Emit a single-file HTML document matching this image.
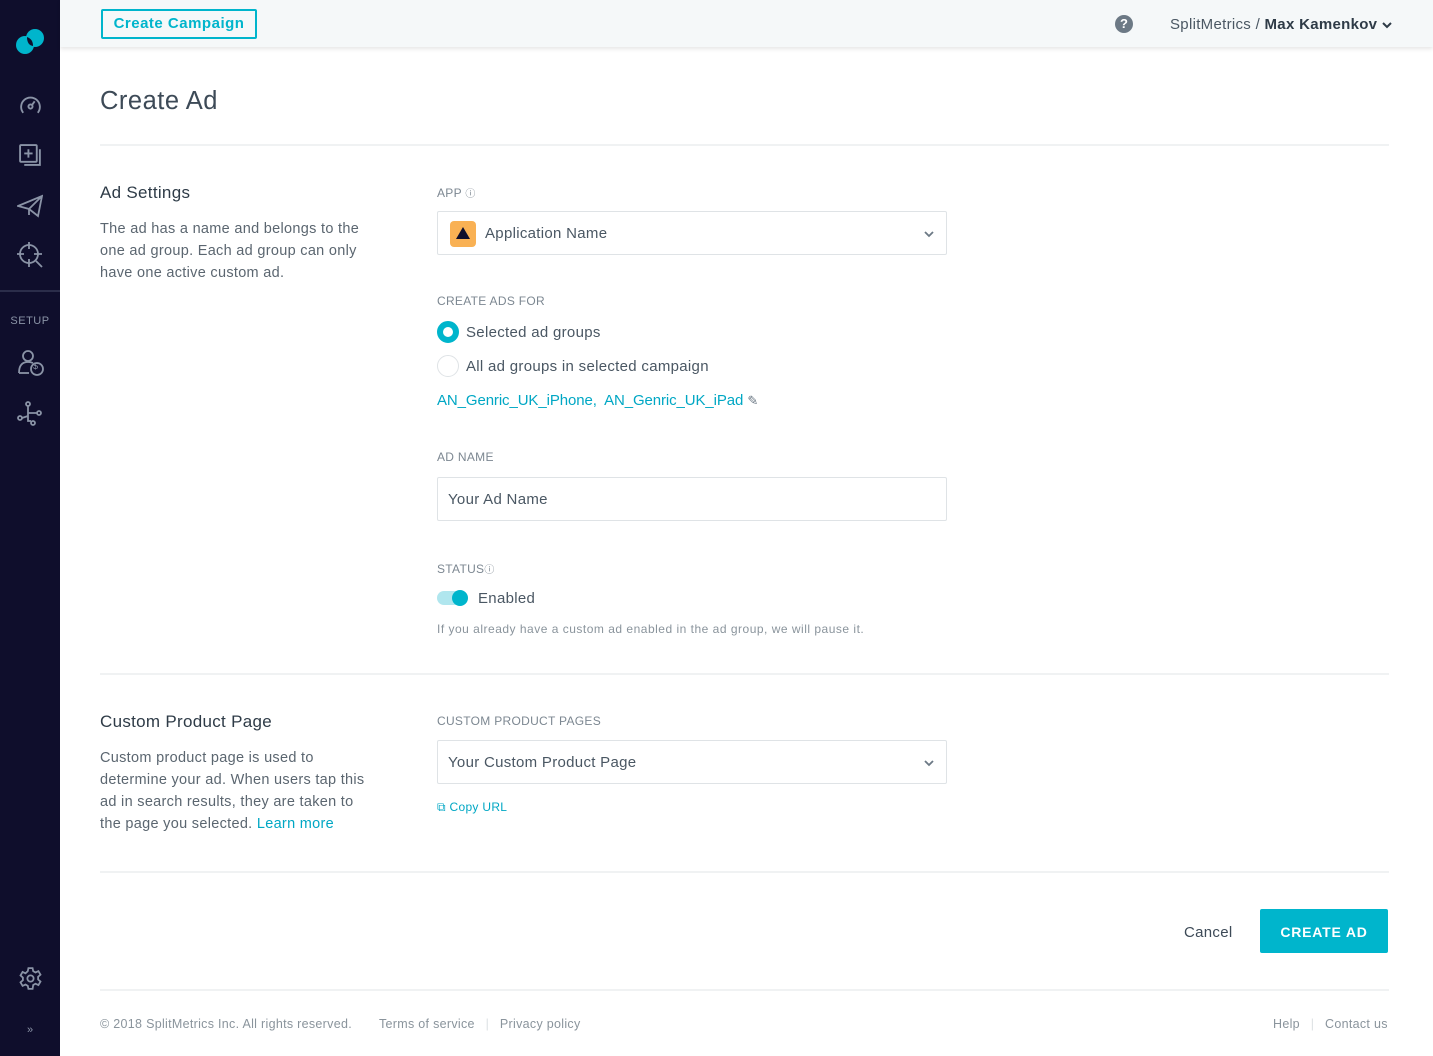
<!DOCTYPE html>
<html><head><meta charset="utf-8"><style>
*{box-sizing:border-box;margin:0;padding:0}
body{width:1433px;height:1056px;overflow:hidden;background:#fff;font-family:"Liberation Sans",sans-serif;color:#3d4a57;position:relative}
.sb{position:absolute;left:0;top:0;width:60px;height:1056px;background:#0f0e2c}
.sb svg{position:absolute}
.hdr{position:absolute;left:60px;top:0;right:0;height:47px;background:#f5f8f9;box-shadow:0 2px 4px rgba(0,0,0,.1)}
.abs{position:absolute}
.lbl{position:absolute;font-size:12px;color:#7c8791;letter-spacing:.3px}
.txt{font-size:15px;color:#4a5763;letter-spacing:.3px}
.hr{position:absolute;left:100px;width:1289px;height:2px;background:#f0f2f3}
.inp{position:absolute;left:437px;width:510px;height:44px;border:1px solid #dfe3e6;border-radius:2px;font-size:15px;color:#4a5763;padding-left:10px;line-height:44px;letter-spacing:.3px}
.chev{position:absolute;right:12px;top:18px}
.desc{position:absolute;left:100px;font-size:14.5px;line-height:22px;color:#5b6670;letter-spacing:.3px}
h3{position:absolute;left:100px;font-size:17px;font-weight:normal;color:#2e3b47;letter-spacing:.3px}
.ft{position:absolute;top:1017px;font-size:12.5px;color:#8a949c;letter-spacing:.3px}
</style></head><body>
<div class="sb">
<svg style="left:15px;top:27px" width="30" height="30" viewBox="0 0 30 30"><circle cx="10" cy="18" r="9" fill="#00b5cc"/><circle cx="20" cy="11" r="9" fill="#00b5cc"/><path d="M12 10 Q18 12 18 19 Q12 18 12 10Z" fill="#0f0e2c"/></svg>
<svg style="left:18px;top:93px" width="25" height="25" viewBox="0 0 24 24" fill="none" stroke="#8a93a6" stroke-width="1.8"><path d="M5 19A9 9 0 1 1 19 19"/><circle cx="12" cy="13" r="2"/><path d="M13.5 11.5L16 8"/></svg>
<svg style="left:18px;top:143px" width="25" height="25" viewBox="0 0 24 24" fill="none" stroke="#8a93a6" stroke-width="1.8"><rect x="2" y="2" width="16" height="16" rx="1"/><path d="M21 6v15H6M10 6v8M6 10h8"/></svg>
<svg style="left:17px;top:194px" width="26" height="24" viewBox="0 0 26 24" fill="none" stroke="#8a93a6" stroke-width="1.8"><path d="M1 12L25 2 21 22 12 15zM12 15L25 2M12 15v6"/></svg>
<svg style="left:16px;top:241px" width="28" height="28" viewBox="0 0 28 28" fill="none" stroke="#8a93a6" stroke-width="1.8"><circle cx="13" cy="13" r="9"/><path d="M13 1v7M13 18v8M1 13h7M18 13h8M20 20l6 6"/></svg>
<div class="abs" style="left:0;top:290px;width:60px;height:2px;background:#2b2d4a"></div>
<div class="abs" style="left:0;top:315px;width:60px;text-align:center;font-size:11px;color:#8a93a6;letter-spacing:.5px">SETUP</div>
<svg style="left:17px;top:350px" width="27" height="27" viewBox="0 0 27 27" fill="none" stroke="#8a93a6" stroke-width="1.8"><circle cx="11" cy="6" r="5"/><path d="M2 23Q2 12 11 12Q14 12 16 13"/><circle cx="20" cy="19" r="6"/><path d="M2 23h10"/></svg>
<div class="abs" style="left:33px;top:361px;font-size:9px;color:#8a93a6">$</div>
<svg style="left:17px;top:401px" width="27" height="25" viewBox="0 0 27 25" fill="none" stroke="#8a93a6" stroke-width="1.8"><circle cx="11" cy="3" r="2"/><circle cx="3" cy="17" r="2"/><circle cx="22" cy="12" r="2"/><circle cx="16" cy="22" r="2"/><path d="M11 5v15h3M11 12h9M11 15L5 17"/></svg>
<svg style="left:18px;top:966px" width="25" height="25" viewBox="0 0 24 24" fill="none" stroke="#8a93a6" stroke-width="1.7"><circle cx="12" cy="12" r="3"/><path d="M10 2h4l.6 3 2.2 1.2 2.8-1.3 2 3.4-2.3 2v2.6l2.3 2-2 3.4-2.8-1.3-2.2 1.2L14 22h-4l-.6-3-2.2-1.2-2.8 1.3-2-3.4 2.3-2v-2.6l-2.3-2 2-3.4 2.8 1.3L9.4 5z"/></svg>
<div class="abs" style="left:0;top:1024px;width:60px;text-align:center;font-size:11px;color:#8a93a6">»</div>
</div>
<div class="hdr">
<div class="abs" style="left:41px;top:9px;width:156px;height:30px;border:2px solid #00b5cc;border-radius:2px;text-align:center;line-height:26px;font-size:15px;font-weight:bold;color:#00b5cc;letter-spacing:.5px">Create Campaign</div>
<div class="abs" style="left:1055px;top:15px;width:18px;height:18px;border-radius:50%;background:#6c7985;color:#fff;font-size:13px;font-weight:bold;text-align:center;line-height:18px">?</div>
<div class="abs" style="left:1110px;top:16px;font-size:15px;color:#4a5763;letter-spacing:.3px">SplitMetrics / <b style="color:#2e3b47">Max Kamenkov</b> <svg width="10" height="8"><path d="M1 2l4 4 4-4" stroke="#2e3b47" stroke-width="2" fill="none"/></svg></div>
</div>
<div class="abs" style="left:100px;top:87px;font-size:25.5px;color:#3d4a57;letter-spacing:.5px">Create Ad</div>
<div class="hr" style="top:144px"></div>
<h3 style="top:183px">Ad Settings</h3>
<div class="desc" style="top:218px">The ad has a name and belongs to the<br>one ad group. Each ad group can only<br>have one active custom ad.</div>
<div class="lbl" style="left:437px;top:185px">APP <span style="font-size:10px">ⓘ</span></div>
<div class="inp" style="top:211px;padding-left:47px"><div class="abs" style="left:12px;top:9px;width:26px;height:26px;border-radius:4px;background:#f9b154"></div><svg class="abs" style="left:18px;top:15px" width="14" height="12"><path d="M7 0L14 12H0z" fill="#0f0e2c"/></svg>Application Name<svg class="chev" width="10" height="8"><path d="M1 2l4 4 4-4" stroke="#6c7985" stroke-width="1.8" fill="none"/></svg></div>
<div class="lbl" style="left:437px;top:294px">CREATE ADS FOR</div>
<div class="abs" style="left:437px;top:321px;width:22px;height:22px;border-radius:50%;border:6px solid #00b5cc"></div>
<div class="abs txt" style="left:466px;top:324px">Selected ad groups</div>
<div class="abs" style="left:437px;top:355px;width:22px;height:22px;border-radius:50%;border:1px solid #dfe3e6"></div>
<div class="abs txt" style="left:466px;top:358px">All ad groups in selected campaign</div>
<div class="abs txt" style="left:437px;top:392px;color:#00a7c4;letter-spacing:-.1px">AN_Genric_UK_iPhone,&nbsp; AN_Genric_UK_iPad <span style="color:#6c7985;font-size:13px">✎</span></div>
<div class="lbl" style="left:437px;top:450px">AD NAME</div>
<div class="inp" style="top:477px">Your Ad Name</div>
<div class="lbl" style="left:437px;top:561px">STATUS<span style="font-size:10px">ⓘ</span></div>
<div class="abs" style="left:437px;top:591px;width:30px;height:14px;border-radius:7px;background:#b0e6ee"></div>
<div class="abs" style="left:452px;top:590px;width:16px;height:16px;border-radius:50%;background:#00b5cc"></div>
<div class="abs txt" style="left:478px;top:590px">Enabled</div>
<div class="lbl" style="left:437px;top:622px;font-size:12px;color:#8a949c;letter-spacing:.5px">If you already have a custom ad enabled in the ad group, we will pause it.</div>
<div class="hr" style="top:673px"></div>
<h3 style="top:712px">Custom Product Page</h3>
<div class="desc" style="top:747px">Custom product page is used to<br>determine your ad. When users tap this<br>ad in search results, they are taken to<br>the page you selected. <span style="color:#00a7c4">Learn more</span></div>
<div class="lbl" style="left:437px;top:714px">CUSTOM PRODUCT PAGES</div>
<div class="inp" style="top:740px">Your Custom Product Page<svg class="chev" width="10" height="8"><path d="M1 2l4 4 4-4" stroke="#6c7985" stroke-width="1.8" fill="none"/></svg></div>
<div class="lbl" style="left:437px;top:800px;color:#00a7c4">⧉ Copy URL</div>
<div class="hr" style="top:871px"></div>
<div class="abs" style="left:1184px;top:924px;font-size:15px;color:#3d4a57;letter-spacing:.3px">Cancel</div>
<div class="abs" style="left:1260px;top:909px;width:128px;height:44px;background:#00b5cc;border-radius:2px;color:#fff;font-weight:bold;font-size:14px;text-align:center;line-height:46px;letter-spacing:.8px">CREATE AD</div>
<div class="hr" style="top:989px"></div>
<div class="ft" style="left:100px">© 2018 SplitMetrics Inc. All rights reserved.</div>
<div class="ft" style="left:379px">Terms of service <span style="color:#dde1e4;margin:0 7px">|</span> Privacy policy</div>
<div class="ft" style="left:1273px">Help <span style="color:#dde1e4;margin:0 7px">|</span> Contact us</div>
</body></html>
